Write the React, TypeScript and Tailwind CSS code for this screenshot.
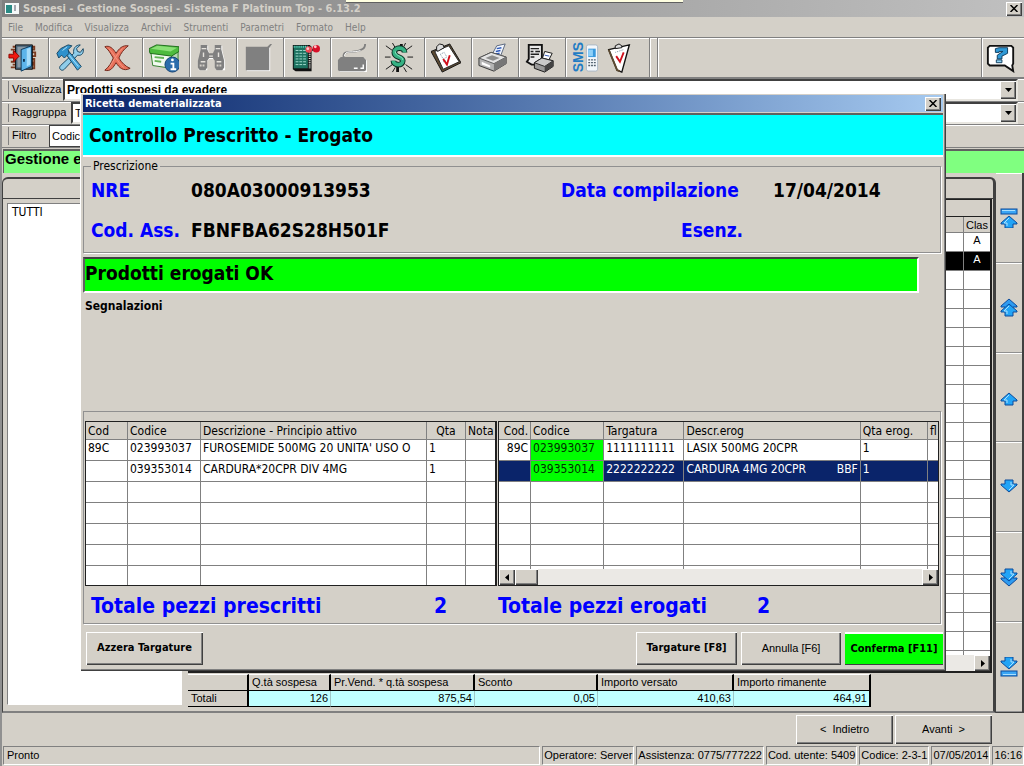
import clsx from "clsx";
import type { ReactNode } from "react";

const raised =
  "bg-[#d4d0c8] shadow-[inset_1px_1px_0_#fff,inset_-1px_-1px_0_#404040,inset_-2px_-2px_0_#808080]";
const tahoma = "font-['DejaVu_Sans_Condensed','DejaVu_Sans',sans-serif]";
const edge = "border border-t-[#808080] border-l-[#808080] border-r-white border-b-white";

const menuItems = ["File", "Modifica", "Visualizza", "Archivi", "Strumenti", "Parametri", "Formato", "Help"];

function Icon({ children }: { children: ReactNode }) {
  return (
    <svg viewBox="0 0 32 32" className="size-[30px] shrink-0" aria-hidden="true">
      {children}
    </svg>
  );
}

function DoorIcon() {
  return (
    <Icon>
      <path
        d="M5 4h6M3 7h5M5 10h5M3 20h6M5 23h5M3 26h6M25 4h3v3h-3M25 10h4v4h-4M25 17h3v4h-3M25 23h3v4h-3"
        fill="none"
        stroke="#7a3a20"
        strokeWidth="2"
      />
      <path d="M8 2h18v26H8z" fill="#4a6478" stroke="#111" />
      <path d="M10 4h10v22H10z" fill="#8b9aa5" />
      <path d="M14 7l11-4v22l-11 5z" fill="#5cb4ea" stroke="#0c3556" />
      <path d="M20 6l4-1v18l-4 2z" fill="#a5dcfa" />
      <path d="M16 17h2v3h-2z" fill="#0c3556" />
      <path d="M1 12h5V8l6 6-6 6v-4H1z" fill="#f01810" stroke="#8a0500" />
    </Icon>
  );
}

function ToolsIcon() {
  return (
    <Icon>
      <path
        d="M27 2l-4 4 1 3 3 1 3-4c1 4-1 8-6 7L10 28c-3 3-7-1-4-4L20 11c-1-5 2-9 7-9z"
        fill="#8fcdea"
        stroke="#15435f"
      />
      <path d="M11 11l3-3 14 17-4 4z" fill="#49a9de" stroke="#15435f" />
      <path d="M2 11l4-5 8-4 4 1-4 4 1 4-5 5-3-3-3 3z" fill="#2e91cc" stroke="#15435f" />
      <path d="M8 8l5-4M15 13l10 12" stroke="#b8e6fb" />
    </Icon>
  );
}

function DeleteIcon() {
  return (
    <Icon>
      <path
        d="M3 4c5-2 9 2 12 7 3-5 7-9 13-8-5 4-8 8-10 13 3 5 7 9 12 11-7 4-12-1-15-6-3 5-6 10-12 8 5-4 7-8 9-13C9 11 7 7 3 4z"
        fill="#e8705a"
        stroke="#6e2418"
      />
      <path d="M7 6c5 4 10 15 16 20M22 6C17 10 12 19 8 26" stroke="#f49a84" fill="none" />
    </Icon>
  );
}

function BoxInfoIcon() {
  return (
    <Icon>
      <path d="M2 10l22 3v14L4 24z" fill="#f2faf0" stroke="#2f7d2a" />
      <path d="M24 13l7-5v13l-7 6z" fill="#b9d8b3" stroke="#2f7d2a" />
      <path d="M0 6l8-4 24 2v5l-8 5-23-3z" fill="#4dbb3e" stroke="#1d6b1a" />
      <path d="M2 6l7-3 21 2-7 4z" fill="#8be077" />
      <path d="M6 15l10 1M6 19l7 1" stroke="#63b457" strokeWidth="2" />
      <circle cx="25" cy="23" r="8" fill="#2a6cab" stroke="#123f70" />
      <path d="M23 22h3v6m-3 0h6" fill="none" stroke="#fff" strokeWidth="2" />
      <circle cx="25" cy="18" r="1.5" fill="#fff" />
    </Icon>
  );
}

function BinocularsIcon() {
  return (
    <Icon>
      <path
        d="M6 3h7v5l2 4h4l2-4V3h7v5l3 12v9h-9v-9l-2-3h-6l-2 3v9H3v-9L6 8z"
        fill="#fff"
      />
      <path d="M5 2h7v5l2 4h4l2-4V2h7v5l3 12v7l-2 3h-6l-2-3v-7l-2-3h-4l-2 3v7l-2 3H4l-2-3v-7L5 7z" fill="#808080" />
      <path d="M6 6h5M21 6h5M5 20h5M22 20h5M14 14h4M8 10v5M24 10v5" stroke="#e6e3dd" strokeWidth="1.5" />
      <path d="M4 24h6M22 24h6" stroke="#d4d0c8" strokeWidth="2" strokeDasharray="2 1" />
    </Icon>
  );
}

function BlockIcon() {
  return (
    <Icon>
      <path d="M4 5h25v25H4z" fill="#fff" />
      <path d="M3 4h23l3-3h2l-3 4v24H3z" fill="#808080" />
    </Icon>
  );
}

function NotebookIcon() {
  return (
    <Icon>
      <path d="M3 2h18l2 2v26H6l-3-2z" fill="#111" />
      <path d="M4 3h15v24H4z" fill="#1d7260" />
      <path d="M6 8h11M6 11h11M6 14h11M6 17h11M6 20h11M6 23h11" stroke="#a4ddd0" strokeDasharray="3 1" />
      <path d="M21 6v22" stroke="#f0f0e8" strokeWidth="2" strokeDasharray="1 1" />
      <path d="M4 4h15" stroke="#5fd4be" strokeWidth="2" strokeDasharray="1 1" />
      <path d="M23 8l3-2" stroke="#333" strokeWidth="2" />
      <circle cx="20" cy="7" r="3.5" fill="#f04854" />
      <circle cx="28" cy="6" r="4" fill="#d81028" />
      <circle cx="19" cy="6" r="1.5" fill="#ffc4c8" />
      <circle cx="27" cy="4" r="1.5" fill="#ffc4c8" />
    </Icon>
  );
}

function ScannerIcon() {
  return (
    <Icon>
      <path d="M3 19l3-3h23l3 3v12H3z" fill="#fff" />
      <path d="M1 18l3-3h24l3 3v11l-2 1H3l-2-1z" fill="#808080" />
      <path d="M7 15c-1-9 12-3 19-8 3-1 4-3 4-6" fill="none" stroke="#808080" strokeWidth="2" />
      <path d="M8 14c0-7 10-3 17-6" fill="none" stroke="#fff" />
      <path d="M18 27h4M25 27h3v-4" fill="none" stroke="#fff" strokeWidth="1.5" />
    </Icon>
  );
}

function DollarIcon() {
  return (
    <Icon>
      <path
        d="M2 3l7 5M1 15h6M2 28l7-5M9 0l3 5M30 3l-7 5M31 15h-6M30 28l-7-5M23 0l-2 4M9 31l3-5M24 31l-3-5"
        stroke="#111"
      />
      <path d="M17 1h3v5h-3zM13 24h3v7h-3z" fill="#111" />
      <path d="M22 10c0-6-11-6-11 0 0 6 9 4 9 9 0 6-10 5-10 0" fill="none" stroke="#0c2a20" strokeWidth="6" />
      <path d="M22 10c0-6-11-6-11 0 0 6 9 4 9 9 0 6-10 5-10 0" fill="none" stroke="#36b183" strokeWidth="4" />
      <path d="M12 9c0 5 8 5 8 9" fill="none" stroke="#8be6c4" />
    </Icon>
  );
}

function ClipboardIcon() {
  return (
    <Icon>
      <path d="M0 9L20 1l12 20-20 10z" fill="#5b4a32" stroke="#111" />
      <path d="M4 9l15-6 11 17-17 8z" fill="#fff" stroke="#222" />
      <path d="M6 7V4l3-3 4 1 1 3-7 4z" fill="#ddd" stroke="#111" />
      <path d="M10 12l4-2 3 5-4 2zM13 20l3-1" fill="none" stroke="#7a90a0" strokeDasharray="1 1" />
      <path d="M13 17l4 6 3-10" fill="none" stroke="#d0101c" strokeWidth="2" />
    </Icon>
  );
}

function PrinterIcon() {
  return (
    <Icon>
      <path d="M14 14L20 3l9-2-5 13z" fill="#f4f8ff" stroke="#55627a" />
      <path d="M20 6l5-1M19 9l5-1M18 12l5-1" stroke="#2d58b8" strokeWidth="1.5" />
      <path d="M1 16l13-6 16 5v7l-13 8-16-6z" fill="#b4b4b4" stroke="#333" />
      <path d="M1 16l13-6 16 5-13 7z" fill="#e4e4e4" stroke="#555" />
      <path d="M8 16l7-3 8 3-7 3z" fill="#8d8d8d" />
      <path d="M17 22v8l13-8v-7z" fill="#777" />
      <path d="M4 20l9 4v2l-9-3z" fill="#fff" />
    </Icon>
  );
}

function PrintQueueIcon() {
  return (
    <Icon>
      <path d="M4 2h14v19l-3 2H7l-5-3 2-3z" fill="#e9e9e9" stroke="#111" strokeWidth="2" />
      <path d="M6 6h9M6 9h3M11 9h5M6 12h9M6 15h4" stroke="#222" strokeWidth="1.5" />
      <path d="M18 18l3-9 8 2-4 8z" fill="#fff" stroke="#111" />
      <path d="M21 13l5 1" stroke="#2d58b8" />
      <path d="M10 21l8-5 12 3v6l-9 6-11-4z" fill="#999" stroke="#111" />
      <path d="M10 21l8-5 12 3-9 6z" fill="#c9c9c9" stroke="#222" />
      <path d="M21 25v6l9-6v-6z" fill="#444" />
    </Icon>
  );
}

function SmsIcon() {
  return (
    <div className="flex h-8 items-center">
      <span className="w-3.5 rotate-180 text-center font-['Liberation_Sans',sans-serif] text-sm leading-[14px] font-bold text-[#1f7cc4] [writing-mode:vertical-rl]">
        SMS
      </span>
      <svg viewBox="0 0 14 30" className="h-7 w-3.5" aria-hidden="true">
        <rect x="1" y="1" width="12" height="28" rx="2" fill="#f3f7fb" stroke="#a9b8c6" />
        <rect x="3" y="5" width="8" height="9" fill="#3a9ade" />
        <path d="M3 6h5v7H3z" fill="#8fd0f8" />
        <path d="M3 17h8M3 20h8M3 23h8" stroke="#51606e" strokeWidth="1.5" strokeDasharray="2 1" />
      </svg>
    </div>
  );
}

function ChecklistIcon() {
  return (
    <Icon>
      <path d="M5 7L27 2 19 31l-5-2z" fill="#fff" stroke="#111" strokeWidth="1.5" />
      <path d="M5 7l9 22 3 1" fill="none" stroke="#5b4a32" strokeWidth="2" />
      <path d="M12 6V3l4-2 3 2v2z" fill="#ddd" stroke="#111" />
      <path d="M12 10l9-3" stroke="#7a90a0" strokeDasharray="1 1" />
      <path d="M13 14l4 6 4-10" fill="none" stroke="#d0101c" strokeWidth="2" />
    </Icon>
  );
}

function HelpIcon() {
  return (
    <Icon>
      <path d="M4 3h23l2 2v17l-1 2 1 6-9-6H4l-2-2V5z" fill="#fff" stroke="#111" strokeWidth="2" />
      <path d="M10 10V6l4-1h9v6l-6 3v3h-5v-4l6-4h-4v1z" fill="#3099d6" stroke="#0c3a5c" />
      <path d="M11 18h6v3h-6z" fill="#8fd0f0" stroke="#0c3a5c" />
    </Icon>
  );
}

const toolbar = [
  { label: "Esci", icon: <DoorIcon /> },
  { label: "Strumenti", icon: <ToolsIcon /> },
  { label: "Elimina", icon: <DeleteIcon /> },
  { label: "Informazioni prodotto", icon: <BoxInfoIcon /> },
  { label: "Cerca", icon: <BinocularsIcon /> },
  { label: "Blocco", icon: <BlockIcon /> },
  { label: "Registro", icon: <NotebookIcon /> },
  { label: "Lettore", icon: <ScannerIcon /> },
  { label: "Incasso", icon: <DollarIcon /> },
  { label: "Appunti", icon: <ClipboardIcon /> },
  { label: "Stampa", icon: <PrinterIcon /> },
  { label: "Coda di stampa", icon: <PrintQueueIcon /> },
];

type ArrowKind = "first" | "pageUp" | "up" | "down" | "pageDown" | "last";

const arrows: { kind: ArrowKind; label: string }[] = [
  { kind: "first", label: "Primo" },
  { kind: "pageUp", label: "Pagina su" },
  { kind: "up", label: "Su" },
  { kind: "down", label: "Giù" },
  { kind: "pageDown", label: "Pagina giù" },
  { kind: "last", label: "Ultimo" },
];

function ArrowIcon({ kind }: { kind: ArrowKind }) {
  const flip = kind === "down" || kind === "pageDown" || kind === "last";
  const double = kind === "pageUp" || kind === "pageDown";
  const bar = kind === "first" || kind === "last";
  const arrow = "M9 1l8 7v1h-4v4H5V9H1V8z";
  const shift = bar ? "translate(0 7)" : double ? "translate(0 5)" : "translate(0 4)";

  return (
    <svg viewBox="0 0 18 20" className="h-5 w-[18px]" aria-hidden="true">
      <g transform={flip ? "rotate(180 9 10)" : undefined} stroke="#0b4a9c">
        {bar && <rect x="1" y="1" width="16" height="5" fill="#3aa5f5" />}
        {bar && <path d="M2 2.500h13" stroke="#a9e0ff" />}
        {double && <path d={arrow} fill="#2f9bf0" />}
        <path d={arrow} fill="#22a4f6" transform={shift} />
        <path d="M9 3L4 8h3v3" fill="none" stroke="#a9e0ff" transform={shift} />
      </g>
    </svg>
  );
}

function Triangle({ dir }: { dir: "down" | "left" | "right" }) {
  const points = { down: "1,2 8,2 4.5,6", left: "6,1 6,8 2,4.5", right: "3,1 3,8 7,4.5" };
  return (
    <svg viewBox="0 0 9 9" className="size-[9px]" aria-hidden="true">
      <polygon points={points[dir]} fill="#000" />
    </svg>
  );
}

function CloseButton() {
  return (
    <button type="button" aria-label="Chiudi" className={clsx("flex h-3.5 w-4 items-center justify-center", raised)}>
      <svg viewBox="0 0 8 7" className="h-[7px] w-2" aria-hidden="true">
        <path d="M0.500 0l7 7M7.500 0l-7 7" stroke="#000" strokeWidth="1.500" />
      </svg>
    </button>
  );
}

function FilterRow({
  id,
  label,
  labelWidth,
  children,
}: {
  id: string;
  label: string;
  labelWidth: string;
  children: ReactNode;
}) {
  return (
    <div className="flex h-[23px] items-stretch border-b border-[#808080] pr-1.5 pl-1 shadow-[inset_0_1px_0_#fff]">
      <div className="my-0.5 w-[3px] border-r border-[#808080]" />
      <label htmlFor={id} className={clsx("shrink-0 pl-[3px] text-[11px] leading-5", labelWidth)}>
        {label}
      </label>
      {children}
    </div>
  );
}

function Combo({ id, value, bold }: { id: string; value: string; bold?: boolean }) {
  return (
    <div className="relative flex-1 border-2 border-[#404040] border-r-[#e8e6e0] border-b-[#e8e6e0] bg-white">
      <select
        id={id}
        defaultValue={value}
        className={clsx("block h-full w-full appearance-none pl-0.5", bold ? "text-xs font-bold" : "text-[11px]")}
      >
        <option>{value}</option>
      </select>
      <span
        className={clsx("pointer-events-none absolute inset-y-0 right-0 flex w-4 items-center justify-center", raised)}
      >
        <Triangle dir="down" />
      </span>
    </div>
  );
}

function ScrollBar({ className, thumb }: { className?: string; thumb?: boolean }) {
  return (
    <div className={clsx("flex h-4 justify-between bg-[#ebe9e5]", className)}>
      <div className="flex">
        <button type="button" aria-label="Scorri a sinistra" className={clsx("flex w-4 items-center justify-center", raised)}>
          <Triangle dir="left" />
        </button>
        {thumb && <div className={clsx("w-[23px]", raised)} />}
      </div>
      <button type="button" aria-label="Scorri a destra" className={clsx("flex w-4 items-center justify-center", raised)}>
        <Triangle dir="right" />
      </button>
    </div>
  );
}

const backRows = Array.from({ length: 23 }, (_, i) => i);

function BackGrid() {
  return (
    <div className="flex min-h-0 flex-1 flex-col border-t border-r-2 border-b-2 border-[#202020] bg-white">
      <div className="h-[17px] shrink-0 border-b border-[#202020] bg-[#d4d0c8]" />
      <div className="min-h-0 flex-1 overflow-hidden">
        <table className="w-full table-fixed border-separate border-spacing-0 text-center text-[11px] leading-[14px]">
          <colgroup>
            <col />
            <col className="w-[19px]" />
            <col className="w-[26px]" />
          </colgroup>
          <thead>
            <tr className="h-4 bg-[#d4d0c8]">
              <th className="border-r border-b border-[#808080] p-0" />
              <th className="border-r border-b border-[#808080] p-0" />
              <th className="border-b border-[#808080] p-0 font-normal">Clas</th>
            </tr>
          </thead>
          <tbody>
            {backRows.map((row) => (
              <tr key={row} className={clsx("h-[19px]", row === 1 && "bg-black text-white")}>
                <td className="border-r border-b border-[#808080] p-0" />
                <td className="border-r border-b border-[#808080] p-0" />
                <td className="border-b border-[#808080] p-0 align-top">{row < 2 ? "A" : ""}</td>
              </tr>
            ))}
          </tbody>
        </table>
      </div>
      <ScrollBar className="shrink-0" />
    </div>
  );
}

const totals = [
  { label: "Q.tà sospesa", value: "126", width: "w-[82px]" },
  { label: "Pr.Vend. * q.tà sospesa", value: "875,54", width: "w-36" },
  { label: "Sconto", value: "0,05", width: "w-[123px]" },
  { label: "Importo versato", value: "410,63", width: "w-[136px]" },
  { label: "Importo rimanente", value: "464,91", width: "w-[137px]" },
];

function TotalsTable() {
  return (
    <table className="w-[683px] table-fixed border-separate border-spacing-0 text-[11px] leading-[15px]">
      <thead>
        <tr>
          <th className="w-[61px] border-t border-r-2 border-b border-black border-t-white" />
          {totals.map((t) => (
            <th
              key={t.label}
              className={clsx(
                "border-t border-r-2 border-b border-black border-t-white p-0 pl-[3px] text-left font-normal",
                t.width
              )}
            >
              {t.label}
            </th>
          ))}
        </tr>
      </thead>
      <tbody>
        <tr>
          <th className="border-r-2 border-b border-black p-0 pl-[3px] text-left font-normal">Totali</th>
          {totals.map((t, i) => (
            <td
              key={t.label}
              className={clsx(
                "border-b border-black bg-[#c0ffff] p-0 pr-0.5 text-right",
                i === totals.length - 1 ? "border-r-2" : "border-r border-r-[#a0c8c8]"
              )}
            >
              {t.value}
            </td>
          ))}
        </tr>
      </tbody>
    </table>
  );
}

type Column = { title: string; width: string; align?: string };

const prescribedColumns: Column[] = [
  { title: "Cod", width: "w-[42px]" },
  { title: "Codice", width: "w-[73px]" },
  { title: "Descrizione - Principio attivo", width: "w-[226px]" },
  { title: "Qta", width: "w-[39px]", align: "text-center" },
  { title: "Nota", width: "w-[30px]" },
];

const prescribedRows = [
  ["89C", "023993037", "FUROSEMIDE 500MG 20 UNITA' USO O", "1", ""],
  ["", "039353014", "CARDURA*20CPR DIV 4MG", "1", ""],
];

const dispensedColumns: Column[] = [
  { title: "Cod.", width: "w-8", align: "text-right" },
  { title: "Codice", width: "w-[73px]" },
  { title: "Targatura", width: "w-20" },
  { title: "Descr.erog", width: "w-44" },
  { title: "Qta erog.", width: "w-[67px]" },
  { title: "fl", width: "w-[10px]" },
];

const dispensedRows = [
  ["89C", "023993037", "1111111111", "LASIX 500MG 20CPR", "1", ""],
  ["", "039353014", "2222222222", "CARDURA 4MG 20CPR|BBF", "1", ""],
];

function Cell({ text }: { text: string }) {
  const [main, note] = text.split("|");
  if (!note) {
    return <>{main}</>;
  }
  return (
    <span className="flex justify-between">
      <span>{main}</span>
      <span>{note}</span>
    </span>
  );
}

function ProductTable({
  columns,
  rows,
  selectedRow,
  greenColumn,
}: {
  columns: Column[];
  rows: string[][];
  selectedRow?: number;
  greenColumn?: number;
}) {
  const padded = [...rows, ...Array.from({ length: 7 - rows.length }, () => columns.map(() => ""))];

  return (
    <table className="w-full table-fixed border-separate border-spacing-0 text-xs leading-4 whitespace-nowrap">
      <thead>
        <tr className="h-[18px] bg-[#d4d0c8]">
          {columns.map((column) => (
            <th
              key={column.title}
              className={clsx(
                "overflow-hidden border-r border-b border-[#808080] p-0 px-0.5 font-normal last:border-r-0",
                column.width,
                column.align ?? "text-left"
              )}
            >
              {column.title}
            </th>
          ))}
        </tr>
      </thead>
      <tbody>
        {padded.map((row, i) => (
          <tr key={i} className={clsx("h-[21px]", i === selectedRow && "bg-[#0a246a] text-white")}>
            {row.map((text, j) => (
              <td
                key={j}
                className={clsx(
                  "overflow-hidden border-r border-b border-[#808080] p-0 px-0.5 align-top last:border-r-0",
                  j === 0 && greenColumn !== undefined && "text-right",
                  j === greenColumn && i < rows.length && "bg-[#00ff00] text-[#003000]"
                )}
              >
                <Cell text={text} />
              </td>
            ))}
          </tr>
        ))}
      </tbody>
    </table>
  );
}

function DialogButton({ children, className }: { children: ReactNode; className?: string }) {
  return (
    <button type="button" className={clsx("h-[33px] text-[11px]", className)}>
      {children}
    </button>
  );
}

function RecipeDialog() {
  return (
    <div
      role="dialog"
      aria-label="Ricetta dematerializzata"
      className={clsx(
        "absolute top-[93px] right-[78px] left-[78px] bg-[#d4d0c8] px-[3px] pt-0.5 pb-1.5 text-black shadow-[inset_1px_1px_0_#fff,inset_-1px_-1px_0_#404040,inset_-2px_-2px_0_#808080]",
        tahoma
      )}
    >
      <div className="flex h-[17px] items-center justify-between bg-linear-to-r from-[#0a246a] to-[#a6caf0] px-0.5">
        <h2 className="text-[11px] leading-4 font-bold text-white">Ricetta dematerializzata</h2>
        <CloseButton />
      </div>

      <div className="mt-px h-11 border-t-2 border-b-2 border-t-[#606060] border-b-white bg-[#00ffff] pl-1.5 text-[19px] leading-10 font-bold">
        Controllo Prescritto - Erogato
      </div>

      <fieldset className="mt-px mr-0.5 h-[95px] border border-[#909090] px-[7px] text-[19px] leading-6 font-bold shadow-[1px_1px_0_#fff]">
        <legend className="px-0.5 text-xs leading-4 font-normal">Prescrizione</legend>
        <dl className="grid grid-cols-[100px_370px_212px_1fr] gap-y-4 pt-1">
          <dt className="text-[#0000ff]">NRE</dt>
          <dd>080A03000913953</dd>
          <dt className="text-[#0000ff]">Data compilazione</dt>
          <dd>17/04/2014</dd>
          <dt className="text-[#0000ff]">Cod. Ass.</dt>
          <dd>FBNFBA62S28H501F</dd>
          <dt className="pl-[120px] text-[#0000ff]">Esenz.</dt>
          <dd />
        </dl>
      </fieldset>

      <div className="mt-1 mr-6 h-9 border-2 border-t-[#404040] border-r-white border-b-white border-l-[#606060] bg-[#00ff00] text-[19px] leading-7 font-bold">
        Prodotti erogati OK
      </div>

      <div className="mt-1 h-[114px] pl-0.5 text-xs leading-[18px] font-bold">Segnalazioni</div>

      <section className="mr-0.5 h-[213px] border border-[#909090] px-px pt-[9px] shadow-[1px_1px_0_#fff]">
        <div className="flex gap-px">
          <div className="h-[165px] w-[412px] shrink-0 overflow-hidden border border-r-2 border-[#202020] bg-white">
            <ProductTable columns={prescribedColumns} rows={prescribedRows} />
          </div>
          <div className="flex h-[165px] min-w-0 flex-1 flex-col border border-[#202020] bg-white">
            <div className="min-h-0 flex-1 overflow-hidden">
              <ProductTable columns={dispensedColumns} rows={dispensedRows} selectedRow={1} greenColumn={1} />
            </div>
            <ScrollBar thumb className="shrink-0" />
          </div>
        </div>
        <dl className="grid grid-cols-[343px_64px_259px_1fr] pt-1.5 pl-1.5 text-[21px] leading-7 font-bold text-[#0000ff]">
          <dt>Totale pezzi prescritti</dt>
          <dd>2</dd>
          <dt>Totale pezzi erogati</dt>
          <dd>2</dd>
        </dl>
      </section>

      <div className="mt-2 flex gap-1 pl-[3px]">
        <DialogButton className={clsx("mr-auto w-[117px] font-bold", raised)}>Azzera Targature</DialogButton>
        <DialogButton className={clsx("w-[101px] font-bold", raised)}>Targature [F8]</DialogButton>
        <DialogButton className={clsx("w-[100px] font-['Liberation_Sans',sans-serif]", raised)}>
          Annulla [F6]
        </DialogButton>
        <DialogButton className="w-[98px] border-t-2 border-b border-t-white border-b-[#404040] bg-[#00ff00] font-bold">
          Conferma [F11]
        </DialogButton>
      </div>
    </div>
  );
}

const statusItems = [
  "Operatore: Server",
  "Assistenza: 0775/777222",
  "Cod. utente: 5409",
  "Codice: 2-3-1",
  "07/05/2014",
  "16:16",
];

export default function App() {
  return (
    <div className="relative flex h-screen min-h-[700px] w-full flex-col overflow-hidden border-l-2 border-[#909090] bg-[#d4d0c8] font-['Liberation_Sans',Arial,sans-serif] text-black">
      <header className="flex h-[17px] shrink-0 items-center gap-1 bg-linear-to-r from-[#808080] to-[#c0c0c0] pr-0.5 pl-[3px]">
        <svg viewBox="0 0 14 11" className="h-[11px] w-3.5" aria-hidden="true">
          <rect width="14" height="11" fill="#f4f8f8" />
          <rect x="1" y="2" width="6" height="8" fill="#2a8a84" />
          <path d="M9 3h2M9 5h2M9 7h2" stroke="#556" />
        </svg>
        <h1 className={clsx("mr-auto text-[11px] leading-4 font-bold text-[#d4d0c8]", tahoma)}>
          Sospesi - Gestione Sospesi - Sistema F Platinum Top - 6.13.2
        </h1>
        <CloseButton />
      </header>
      <div className="absolute top-0 left-[344px] h-[3px] w-[337px] border-b border-[#606060] bg-[#ffffe1]" />

      <nav className={clsx("flex h-5 shrink-0 items-center gap-3 pl-1.5 text-[10px] text-[#808080]", tahoma)}>
        {menuItems.map((item) => (
          <button key={item} type="button">
            {item}
          </button>
        ))}
      </nav>

      <div className="flex h-[42px] shrink-0 items-stretch border-t border-b-2 border-t-[#808080] border-b-[#808080] shadow-[inset_0_1px_0_#fff]">
        {toolbar.map((tool) => (
          <button
            key={tool.label}
            type="button"
            aria-label={tool.label}
            className="flex w-[47px] items-center justify-center border-r border-[#808080] pr-1 shadow-[1px_0_0_#fff]"
          >
            {tool.icon}
          </button>
        ))}
        <button type="button" aria-label="SMS" className="flex w-[38px] items-center justify-center">
          <SmsIcon />
        </button>
        <button
          type="button"
          aria-label="Controllo"
          className="flex w-[46px] items-center border-r border-[#808080] shadow-[1px_0_0_#fff]"
        >
          <ChecklistIcon />
        </button>
        <div className="w-2 border-r border-[#808080] shadow-[1px_0_0_#fff]" />
        <div className="flex-1" />
        <button
          type="button"
          aria-label="Guida"
          className="flex w-[43px] items-center justify-center border-l border-[#808080] pr-1 shadow-[inset_1px_0_0_#fff]"
        >
          <HelpIcon />
        </button>
      </div>

      <FilterRow id="visualizza" label="Visualizza" labelWidth="w-[54px]">
        <Combo id="visualizza" value="Prodotti sospesi da evadere" bold />
      </FilterRow>
      <FilterRow id="raggruppa" label="Raggruppa" labelWidth="w-[62px]">
        <Combo id="raggruppa" value="Tutti" />
      </FilterRow>
      <FilterRow id="filtro" label="Filtro" labelWidth="w-10">
        <input
          id="filtro"
          defaultValue="Codice"
          className="w-52 border border-[#404040] bg-white pl-0.5 text-[11px]"
        />
      </FilterRow>

      <div className="mt-px ml-px h-6 shrink-0 border-t-2 border-l border-[#606060] bg-[#80ff80] pl-px text-[15px] leading-4 font-bold">
        Gestione e
      </div>

      <main className="flex min-h-0 flex-1">
        <div className="mt-1 flex min-w-0 flex-1 flex-col rounded-t-md border-t-2 border-r-[3px] border-b-2 border-l border-[#404040] border-b-[#808080]">
          <div className="h-5 shrink-0 border-b border-[#404040]" />
          <div className="flex min-h-0 flex-1 gap-1.5 pr-px pl-1">
            <ul className={clsx("mt-1 mb-1.5 w-[175px] shrink-0 bg-white pl-1 text-xs leading-4", edge, tahoma)}>
              <li>TUTTI</li>
            </ul>
            <div className="flex min-w-0 flex-1 flex-col">
              <BackGrid />
              <div className="mt-px mb-1">
                <TotalsTable />
              </div>
            </div>
          </div>
        </div>
        <div className="flex w-7 shrink-0 flex-col border-r-2 border-b border-[#404040]">
          {arrows.map(({ kind, label }) => (
            <button
              key={kind}
              type="button"
              aria-label={label}
              className="flex flex-1 items-center justify-center border-t border-b border-t-white border-b-[#909090]"
            >
              <ArrowIcon kind={kind} />
            </button>
          ))}
        </div>
      </main>

      <div className="flex h-[33px] shrink-0 justify-end gap-0.5 pt-0.5 pr-8 text-[11px]">
        <button type="button" className={clsx("h-[29px] w-[97px]", raised)}>
          &lt; &nbsp;Indietro
        </button>
        <button type="button" className={clsx("h-[29px] w-[97px]", raised)}>
          Avanti &nbsp;&gt;
        </button>
      </div>

      <footer className="flex h-5 shrink-0 gap-0.5 pb-px pl-px text-[11px] leading-[17px] whitespace-nowrap">
        <div className={clsx("flex-1 pl-[3px]", edge)}>Pronto</div>
        {statusItems.map((item) => (
          <div key={item} className={clsx("shrink-0 px-px", edge)}>
            {item}
          </div>
        ))}
      </footer>

      <RecipeDialog />
    </div>
  );
}
